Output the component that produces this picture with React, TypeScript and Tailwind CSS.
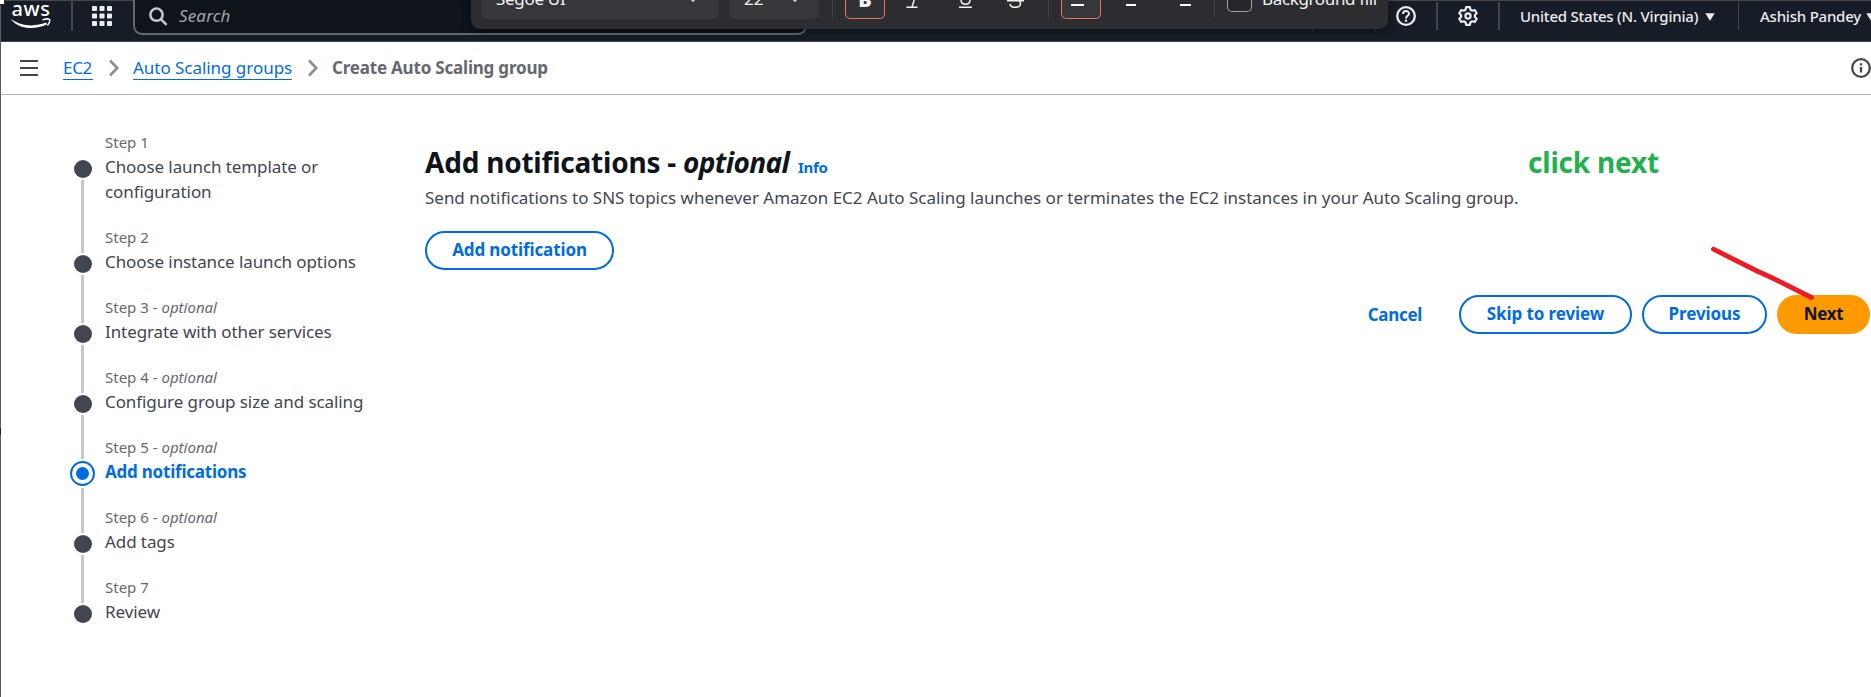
import React from 'react';

const steps = [
  { label: 'Step 1', title: 'Choose launch template or configuration' },
  { label: 'Step 2', title: 'Choose instance launch options' },
  { label: 'Step 3', optional: true, title: 'Integrate with other services' },
  { label: 'Step 4', optional: true, title: 'Configure group size and scaling' },
  { label: 'Step 5', optional: true, title: 'Add notifications', active: true },
  { label: 'Step 6', optional: true, title: 'Add tags' },
  { label: 'Step 7', title: 'Review' },
];

function AwsLogo() {
  return (
    <div className="flex w-[40px] flex-col items-center">
      <span className="-mt-[5px] h-[22px] text-[20px] leading-[25px] font-medium tracking-[0.6px] text-white">aws</span>
      <svg className="h-[11px] w-[40px]" viewBox="0 0 40 11" fill="none">
        <path d="M0.6 1.2 C9 7.5 22 9.6 35.2 4.6 L36 6.2 C24 12.2 9 11.4 0.6 2.2 Z" fill="#fff" />
        <path d="M31.5 2.2 C34 0.9 37.5 0.8 38.5 1.3 C39 2.6 38 5.6 36.4 7.4" stroke="#fff" strokeWidth="1.5" />
      </svg>
    </div>
  );
}

function Chevron() {
  return (
    <svg className="h-[18px] w-[12px]" viewBox="0 0 12 18" fill="none">
      <path d="M2 1.5 L9.3 9 L2 16.5" stroke="#8c8c94" strokeWidth="2.6" />
    </svg>
  );
}

function Caret() {
  return (
    <svg className="h-[8px] w-[10px] shrink-0" viewBox="0 0 10 8">
      <path d="M0.3 0.3 H9.7 L5 7.8 Z" fill="#ebebf0" />
    </svg>
  );
}

function Header() {
  return (
    <header className="flex h-[42px] items-start border-t border-b border-t-[#45474a] border-b-[#424650] bg-[#161d26] pl-[11px] text-[#ebebf0]">
      <AwsLogo />
      <div className="ml-[20px] h-[30px] w-[2px] bg-[#424650]" />
      <svg className="mt-[5px] ml-[19px] h-[20px] w-[20px]" viewBox="0 0 20 20" fill="#ebebf0">
        {[0, 7.5, 15].map((y) =>
          [0, 7.5, 15].map((x) => <rect key={`${x}-${y}`} x={x} y={y} width="5" height="5" rx="0.8" />),
        )}
      </svg>
      <div className="-mt-[1px] ml-[21px] flex h-[35px] w-[674px] items-center rounded-b-[9px] border-x-2 border-b-2 border-[#656871] bg-[#0f141a] pl-[14px]">
        <svg className="h-[19px] w-[19px]" viewBox="0 0 19 19" fill="none" stroke="#c6c6cd" strokeWidth="2.5">
          <circle cx="7.5" cy="7.7" r="6.1" />
          <path d="M11.9 12.1 L17.6 17.8" />
        </svg>
        <span className="-mt-[2px] ml-[11px] text-[17px] tracking-[0.15px] text-[#a4a4ad] italic">Search</span>
      </div>
      <div className="ml-[505px] h-[30px] w-[1px] bg-[#424650]" />
      <div className="ml-[62px] h-[30px] w-[1px] bg-[#424650]" />
      <svg className="mt-[5px] ml-[20px] h-[20px] w-[20px]" viewBox="0 0 20 20" fill="none" stroke="#ebebf0" strokeWidth="2.3">
        <circle cx="10" cy="10" r="8.8" />
        <path d="M7 8 C7 4.2 13 4.2 13 7.7 C13 9.9 10 9.7 10 12.4" strokeWidth="2" />
        <path d="M10 13.6 V15.8" strokeWidth="2.2" />
      </svg>
      <div className="mt-[1px] ml-[20px] h-[28px] w-[2px] bg-[#424650]" />
      <svg className="mt-[5px] ml-[20px] h-[20px] w-[20px]" viewBox="0 0 20 20" fill="none" stroke="#ebebf0" strokeWidth="2.2" strokeLinejoin="round">
        <path d="M8.1 1.2 H11.9 L12.5 3.7 L14.3 4.7 L16.8 4 L18.7 7.2 L16.9 9 V11 L18.7 12.8 L16.8 16 L14.3 15.3 L12.5 16.3 L11.9 18.8 H8.1 L7.5 16.3 L5.7 15.3 L3.2 16 L1.3 12.8 L3.1 11 V9 L1.3 7.2 L3.2 4 L5.7 4.7 L7.5 3.7 Z" />
        <circle cx="10" cy="10" r="2.6" />
      </svg>
      <div className="mt-[1px] ml-[20px] h-[28px] w-[2px] bg-[#424650]" />
      <button className="mt-[5px] ml-[20px] flex h-[21px] items-center gap-[7px] text-[15px] font-medium tracking-[-0.22px] whitespace-nowrap">
        <span className="w-[178px] text-left">United States (N. Virginia)</span>
        <Caret />
      </button>
      <div className="mt-[1px] ml-[23px] h-[28px] w-px bg-[#424650]" />
      <button className="mt-[5px] ml-[21px] flex h-[21px] w-[111px] items-center overflow-hidden text-[15px] font-medium tracking-[-0.22px] whitespace-nowrap">
        <span className="w-[106px] shrink-0 text-left">Ashish Pandey</span>
        <Caret />
      </button>
    </header>
  );
}

function FormatToolbar() {
  return (
    <div className="absolute top-0 left-[471px] flex h-[29px] w-[917px] items-start overflow-hidden rounded-b-[9px] bg-[#2b2d31] text-[17px] text-[#f2f2f2] shadow-[0_2px_8px_rgba(0,0,0,0.45)]">
      <div className="ml-[10px] flex h-[19px] w-[238px] items-start justify-between rounded-b-[5px] bg-[#36373b] pr-[21px] pl-[15px]">
        <span className="-mt-[13px] h-[24px] leading-[24px] tracking-[-0.3px]">Segoe UI</span>
        <svg className="-mt-[3px] h-[6px] w-[10px]" viewBox="0 0 10 6" fill="none" stroke="#cfcfd2" strokeWidth="1.6">
          <path d="M1 0 L5 4 L9 0" />
        </svg>
      </div>
      <div className="ml-[10px] flex h-[19px] w-[90px] items-start justify-between rounded-b-[5px] bg-[#36373b] pr-[19px] pl-[15px]">
        <span className="-mt-[13px] h-[24px] leading-[24px]">22</span>
        <svg className="-mt-[3px] h-[6px] w-[10px]" viewBox="0 0 10 6" fill="none" stroke="#cfcfd2" strokeWidth="1.6">
          <path d="M1 0 L5 4 L9 0" />
        </svg>
      </div>
      <div className="ml-[13px] h-[18px] w-px bg-[#414246]" />
      <div className="ml-[12px] flex h-[19px] w-[40px] items-start justify-center rounded-b-[5px] border-x border-b border-[#e8735a] bg-[#313236]">
        <span className="-mt-[14px] h-[28px] text-[20px] leading-[28px] font-black">B</span>
      </div>
      <svg className="ml-[21px] h-[9px] w-[13px]" viewBox="0 0 13 9" fill="none" stroke="#f2f2f2" strokeWidth="1.5">
        <path d="M0.5 7.2 H11.5 M6 7 L8.2 0" />
      </svg>
      <svg className="ml-[40px] h-[9px] w-[13px]" viewBox="0 0 13 9" fill="none" stroke="#f2f2f2" strokeWidth="1.5">
        <path d="M0 7.2 H13 M2 0 C2 5.6 11 5.6 11 0" />
      </svg>
      <svg className="ml-[35px] h-[9px] w-[17px]" viewBox="0 0 17 9" fill="none" stroke="#f2f2f2" strokeWidth="1.5">
        <path d="M0 0.7 H17 M3 3.8 C3.5 8.6 14 8.4 13.5 3.5 C13.4 2.2 12.8 1.5 12 0.8" />
      </svg>
      <div className="ml-[24px] h-[18px] w-px bg-[#414246]" />
      <div className="ml-[12px] flex h-[19px] w-[40px] items-start rounded-b-[5px] border-x border-b border-[#e8735a] bg-[#36373b] pt-[4px] pl-[9px]">
        <div className="h-[1.5px] w-[13px] bg-white" />
      </div>
      <div className="mt-[4px] ml-[25px] h-[1.5px] w-[10px] bg-white" />
      <div className="mt-[4px] ml-[44px] h-[1.5px] w-[11px] bg-white" />
      <div className="ml-[23px] h-[18px] w-px bg-[#414246]" />
      <div className="ml-[12px] h-[12px] w-[25px] rounded-b-[5px] border-x border-b border-[#a0a1a4] bg-[#26272b]" />
      <span className="-mt-[13px] ml-[10px] h-[24px] leading-[24px] tracking-[-0.35px] whitespace-nowrap">Background fill</span>
    </div>
  );
}

function Breadcrumbs() {
  return (
    <div className="flex h-[53px] items-center border-b border-[#b4b4bb] pl-[20px] text-[17px]">
      <div className="flex w-[18px] flex-col gap-[5px]">
        <div className="h-[2px] bg-[#424650]" />
        <div className="h-[2px] bg-[#424650]" />
        <div className="h-[2px] bg-[#424650]" />
      </div>
      <nav className="ml-[25px] flex items-center leading-[22px] whitespace-nowrap">
        <a className="h-[23px] w-[30px] border-b border-[#006ce0] tracking-[-0.3px] text-[#006ce0]">EC2</a>
        <span className="ml-[15px]"><Chevron /></span>
        <a className="ml-[13px] h-[23px] w-[159px] border-b border-[#006ce0] tracking-[-0.04px] text-[#006ce0]">Auto Scaling groups</a>
        <span className="ml-[15px]"><Chevron /></span>
        <span className="ml-[13px] h-[23px] font-bold tracking-[-0.2px] text-[#656871]">Create Auto Scaling group</span>
      </nav>
      <svg className="ml-auto h-[20px] w-[20px]" viewBox="0 0 20 20" fill="none" stroke="#424650" strokeWidth="2.3">
        <circle cx="10" cy="10" r="8.8" />
        <path d="M10 9 V14.5 M10 5.3 V7.5" />
      </svg>
    </div>
  );
}

function Steps() {
  return (
    <ol className="ml-[69px] flex w-[300px] flex-col pt-[37px]">
      {steps.map((s, i) => (
        <li key={s.label} className={i === 0 ? 'flex h-[95px]' : 'flex h-[70px]'}>
          <div className="flex w-[27px] shrink-0 flex-col items-center">
            <div
              className={
                i === 0
                  ? 'h-[26px] w-[3px]'
                  : s.active
                    ? 'h-[22px] w-[3px] bg-[#c6c6cd]'
                    : 'h-[26px] w-[3px] bg-[#c6c6cd]'
              }
            />
            {s.active ? (
              <div className="my-[2px] flex h-[25px] w-[25px] shrink-0 items-center justify-center rounded-full border-[2.5px] border-[#006ce0]">
                <div className="h-[13px] w-[13px] rounded-full bg-[#006ce0]" />
              </div>
            ) : (
              <div className="my-[2px] h-[18px] w-[18px] shrink-0 rounded-full bg-[#424650]" />
            )}
            {i < steps.length - 1 && <div className="w-[3px] flex-1 bg-[#c6c6cd]" />}
          </div>
          <div className="ml-[9px] w-[265px]">
            <div className="h-[20px] text-[15px] leading-[20px] text-[#656871]">
              {s.label}
              {s.optional && (
                <>
                  {' - '}
                  <i>optional</i>
                </>
              )}
            </div>
            <div
              className={
                s.active
                  ? 'mt-[2px] text-[17px] leading-[25px] font-bold tracking-[-0.22px] text-[#006ce0]'
                  : 'mt-[2px] text-[17px] leading-[25px] tracking-[-0.09px] text-[#424650]'
              }
            >
              {i === 0 ? (
                <>
                  Choose launch template or
                  <br />
                  configuration
                </>
              ) : (
                s.title
              )}
            </div>
          </div>
        </li>
      ))}
    </ol>
  );
}

const outline =
  'flex h-[39px] items-center justify-center rounded-full border-2 border-[#006ce0] pb-[1px] text-[17px] font-bold text-[#006ce0]';

function Main() {
  return (
    <main className="ml-[56px] flex-1 pt-[48px]">
      <h1 className="flex h-[42px] items-baseline text-[28px] leading-[38px] font-bold whitespace-nowrap text-[#0f141a]">
        <span className="w-[258px] tracking-[-0.22px]">Add notifications -</span>
        <i className="w-[115px] tracking-[-0.6px]">optional</i>
        <a className="text-[15px] tracking-[-0.3px] text-[#006ce0]">Info</a>
      </h1>
      <p className="h-[46px] text-[17px] leading-[25px] tracking-[-0.02px] whitespace-nowrap text-[#424650]">
        Send notifications to SNS topics whenever Amazon EC2 Auto Scaling launches or terminates the EC2 instances in your Auto Scaling group.
      </p>
      <button className={`${outline} w-[189px] tracking-[-0.12px]`}>Add notification</button>
      <div className="mt-[25px] flex items-center justify-end gap-[10px] pr-[1px]">
        <button className="mr-[27px] text-[17px] font-bold tracking-[-0.3px] text-[#006ce0]">Cancel</button>
        <button className={`${outline} w-[173px] tracking-[-0.1px]`}>Skip to review</button>
        <button className={`${outline} w-[125px] tracking-[-0.1px]`}>Previous</button>
        <button className="flex h-[39px] w-[93px] items-center justify-center rounded-full bg-[#ff9900] pb-[1px] text-[17px] font-bold tracking-[-0.3px] text-[#0f141a]">
          Next
        </button>
      </div>
    </main>
  );
}

export default function App() {
  return (
    <div className="relative h-[697px] w-[1871px] overflow-hidden bg-white font-['Noto_Sans',sans-serif]">
      <Header />
      <Breadcrumbs />
      <div className="flex">
        <Steps />
        <Main />
      </div>
      <FormatToolbar />
      <div className="absolute top-0 left-0 h-[697px] w-px bg-[#5a5c60]" />
      <div className="absolute top-0 left-0 h-[5px] w-[5px] border-r border-b border-[#222] bg-white" />
      <div className="absolute top-[428px] left-0 h-[7px] w-px bg-[#222]" />
      <div className="absolute top-[143px] left-[1528px] text-[28px] leading-[38px] font-bold tracking-[-0.2px] whitespace-nowrap text-[#22b14c]">click next</div>
      <svg className="absolute top-[240px] left-[1700px] h-[70px] w-[130px]" viewBox="0 0 130 70" fill="none">
        <path d="M13.5 9.2 L57 31 L74 38.8 L111.5 57.5" stroke="#ed1c24" strokeWidth="4.8" strokeLinecap="round" strokeLinejoin="round" />
      </svg>
    </div>
  );
}
